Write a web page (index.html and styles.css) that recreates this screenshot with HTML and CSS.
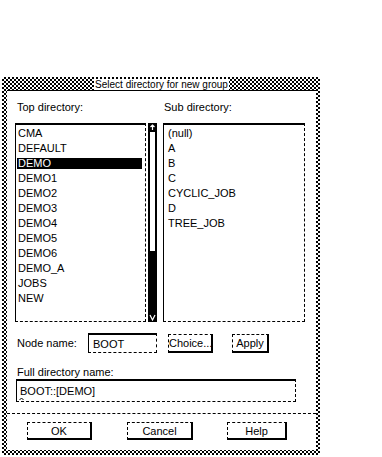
FILE: index.html
```html
<!DOCTYPE html>
<html lang="en">
<head>
    <meta charset="UTF-8">
    <title>Select directory for new group</title>
    <link rel="stylesheet" href="styles.css">
</head>
<body>
    <div class="dialog">
        <div class="titlebar">
            <span class="title">Select directory for new group</span>
        </div>
        <div class="panel">
            <div class="lists">
                <div class="col">
                    <div class="label">Top directory:</div>
                    <div class="list-row">
                        <ul class="list list-top">
                            <li>CMA</li>
                            <li>DEFAULT</li>
                            <li class="selected">DEMO</li>
                            <li>DEMO1</li>
                            <li>DEMO2</li>
                            <li>DEMO3</li>
                            <li>DEMO4</li>
                            <li>DEMO5</li>
                            <li>DEMO6</li>
                            <li>DEMO_A</li>
                            <li>JOBS</li>
                            <li>NEW</li>
                        </ul>
                        <div class="scrollbar">
                            <span class="arrow">
                                <svg width="7" height="7" viewBox="0 0 7 7"><path d="M3.5 1 L3.5 6 M1.5 3 L3.5 1 L5.5 3" stroke="#fff" stroke-width="1.2" fill="none"/></svg>
                            </span>
                            <div class="track"></div>
                            <div class="thumb"></div>
                            <span class="arrow">
                                <svg width="7" height="7" viewBox="0 0 7 7"><path d="M1 1 L3.5 6 L6 1" stroke="#fff" stroke-width="1.2" fill="none"/></svg>
                            </span>
                        </div>
                    </div>
                </div>
                <div class="col col-sub">
                    <div class="label">Sub directory:</div>
                    <ul class="list list-sub">
                        <li>(null)</li>
                        <li>A</li>
                        <li>B</li>
                        <li>C</li>
                        <li>CYCLIC_JOB</li>
                        <li>D</li>
                        <li>TREE_JOB</li>
                    </ul>
                </div>
            </div>

            <div class="node-row">
                <span class="node-label">Node name:</span>
                <div class="field node-field">BOOT</div>
                <button class="btn btn-choice">Choice...</button>
                <button class="btn btn-apply">Apply</button>
            </div>

            <div class="label full-label">Full directory name:</div>
            <div class="field full-field">
                BOOT::[DEMO]
                <svg class="caret" width="5" height="3" viewBox="0 0 5 3"><path d="M0.5 3 L2.5 1 L4.5 3" stroke="#000" fill="none"/></svg>
            </div>

            <div class="separator"></div>

            <div class="actions">
                <button class="btn btn-ok">OK</button>
                <button class="btn btn-cancel">Cancel</button>
                <button class="btn btn-help">Help</button>
            </div>
        </div>
    </div>
</body>
</html>
```

FILE: styles.css
```css
body {
    margin: 0;
    background: #fff;
    color: #000;
    font-family: 'Liberation Sans', Arial, sans-serif;
    font-size: 11px;
}

.dialog {
    width: 309px;
    height: 373px;
    margin: 77px 0 0 2px;
    padding: 0 4px 5px 5px;
    display: flex;
    flex-direction: column;
    background-image: conic-gradient(#000 0 25%, #fff 0 50%, #000 0 75%, #fff 0);
    background-size: 4px 4px;
}

.titlebar {
    height: 13px;
    display: flex;
    justify-content: center;
    align-items: flex-end;
}

.title {
    background: #fff;
    padding: 0 1px;
    line-height: 11px;
    font-size: 10px;
}

.panel {
    flex: 1;
    background: #fff;
    border-top: 1px solid #000;
    padding: 10px 8px 0 8px;
    display: flex;
    flex-direction: column;
}

.label {
    line-height: 12px;
    padding-left: 2px;
}

.lists {
    display: flex;
}

.col {
    display: flex;
    flex-direction: column;
    gap: 10px;
}

.col-sub {
    margin-left: 6px;
}

.col-sub .label {
    padding-left: 1px;
}

.list-row {
    display: flex;
    gap: 2px;
}

.list {
    list-style: none;
    margin: 0;
    height: 195px;
    border-top: 2px solid #000;
    border-left: 1px solid #000;
    border-right: 1px dashed #000;
    border-bottom: 1px dashed #000;
}

.list li {
    line-height: 11px;
    padding: 2px 0;
    white-space: nowrap;
}

.list-top {
    width: 128px;
    padding: 1px 0 0 1px;
}

.list-top li {
    margin-right: 3px;
    padding-left: 1px;
}

.list-top li.selected {
    background: #000;
    background-clip: content-box;
    color: #fff;
    padding-left: 0;
    text-indent: 1px;
}

.list-sub {
    width: 136px;
    padding: 1px 0 0 4px;
}

.scrollbar {
    width: 9px;
    height: 199px;
    display: flex;
    flex-direction: column;
    background: #000;
}

.arrow {
    height: 9px;
    display: flex;
    align-items: center;
    justify-content: center;
}

.track {
    flex: 1;
    margin: 0 2px 0 2px;
    background: #fff;
}

.thumb {
    height: 62px;
}

.node-row {
    display: flex;
    align-items: center;
    margin-top: 11px;
    height: 20px;
}

.node-label {
    width: 71px;
    padding-left: 2px;
}

.field {
    border-top: 2px solid #000;
    border-left: 1px solid #000;
    border-right: 1px dashed #000;
    border-bottom: 1px dashed #000;
    box-sizing: border-box;
    display: flex;
    align-items: center;
}

.node-field {
    width: 69px;
    height: 20px;
    padding-left: 4px;
}

.btn {
    font: inherit;
    color: #000;
    background: #fff;
    border-top: 1px dashed #000;
    border-left: 1px dashed #000;
    border-right: 2px solid #000;
    border-bottom: 2px solid #000;
    padding: 0;
    box-sizing: border-box;
    border-radius: 0;
}

.btn-choice {
    width: 45px;
    height: 19px;
    margin-left: 11px;
}

.btn-apply {
    width: 37px;
    height: 19px;
    margin-left: 19px;
}

.full-label {
    margin-top: 13px;
}

.full-field {
    position: relative;
    width: 280px;
    height: 23px;
    margin: 1px 0 0 1px;
    padding-left: 3px;
}

.caret {
    position: absolute;
    left: 2px;
    bottom: 1px;
}

.separator {
    margin: 11px -8px 0 -8px;
    border-top: 1px dashed #000;
}

.actions {
    display: flex;
    margin-top: 8px;
    padding-left: 12px;
}

.actions .btn {
    height: 18px;
}

.btn-ok {
    width: 65px;
}

.btn-cancel {
    width: 66px;
    margin-left: 35px;
}

.btn-help {
    width: 60px;
    margin-left: 34px;
}
```
